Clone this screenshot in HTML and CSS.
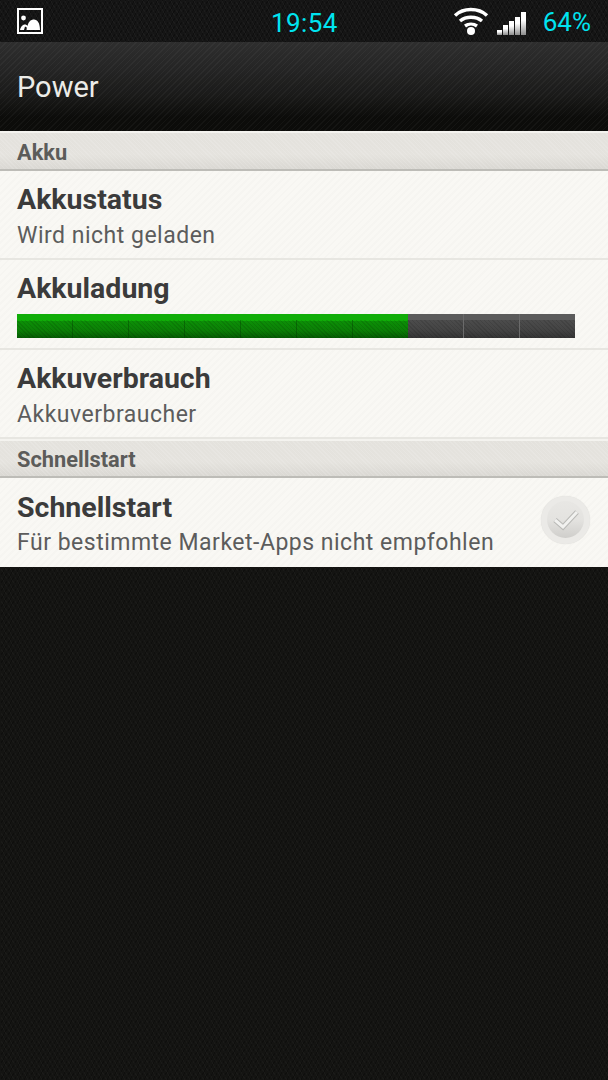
FILE: index.html
```html
<!DOCTYPE html>
<html lang="de">
<head>
    <meta charset="UTF-8">
    <meta name="viewport" content="width=device-width, initial-scale=1.0">
    <title>Power</title>
    <link rel="stylesheet" href="styles.css">
</head>
<body>

    <div class="statusbar">
        <div class="status-left">
            <svg class="picture-icon" width="26" height="26" viewBox="0 0 26 26">
                <rect x="1" y="1" width="24" height="24" fill="none" stroke="#fff" stroke-width="2"/>
                <circle cx="6.5" cy="10" r="2.4" fill="#fff"/>
                <path d="M3 22 C4 18 6 16.500 8 16.500 C9 16.500 10 17 10.500 18 C11.500 13.500 14 11.500 17 11.500 C20.500 11.500 23 15 23 22 Z M7 22 L9.500 22 L9.800 19.500 L8 18.500 Z" fill="#fff" fill-rule="evenodd"/>
            </svg>
        </div>
        <div class="clock">19:54</div>
        <div class="status-right">
            <svg class="wifi-icon" width="36" height="30" viewBox="0 0 36 30">
                <g fill="none" stroke="#fff" stroke-width="3.400">
                    <path d="M2 9.500 C10.500 1.500 25.500 1.500 34 9.500"/>
                    <path d="M7 15 C13 10 23 10 29 15"/>
                    <path d="M12 20 C15.500 17.500 20.500 17.500 24 20"/>
                </g>
                <circle cx="18" cy="25" r="4" fill="#fff"/>
            </svg>
            <div class="signal">
                <span class="signal-bar bar-1"></span>
                <span class="signal-bar bar-2"></span>
                <span class="signal-bar bar-3"></span>
                <span class="signal-bar bar-4"></span>
                <span class="signal-bar bar-5"></span>
            </div>
            <div class="battery-text">64%</div>
        </div>
    </div>

    <div class="actionbar">
        <h1>Power</h1>
    </div>

    <div class="list">
        <div class="section section-first">Akku</div>

        <div class="row">
            <div class="row-title">Akkustatus</div>
            <div class="row-sub">Wird nicht geladen</div>
        </div>

        <div class="row row-level">
            <div class="row-title">Akkuladung</div>
            <div class="level">
                <div class="level-fill"></div>
                <div class="level-rest"></div>
            </div>
        </div>

        <div class="row">
            <div class="row-title">Akkuverbrauch</div>
            <div class="row-sub">Akkuverbraucher</div>
        </div>

        <div class="section">Schnellstart</div>

        <div class="row row-check">
            <div class="row-text">
                <div class="row-title">Schnellstart</div>
                <div class="row-sub">Für bestimmte Market-Apps nicht empfohlen</div>
            </div>
            <div class="check">
                <div class="check-inner">
                    <svg width="30" height="24" viewBox="0 0 30 24">
                        <path d="M4 12 L12 19 L26 4" fill="none" stroke="#b9b9b6" stroke-width="5"/>
                        <path d="M4 12 L12 19 L26 4" fill="none" stroke="#f1f1ef" stroke-width="3"/>
                    </svg>
                </div>
            </div>
        </div>
    </div>

</body>
</html>
```

FILE: styles.css
```css
* {
    box-sizing: border-box;
}

html, body {
    height: 100%;
}

body {
    margin: 0;
    font-family: Roboto, "Liberation Sans", sans-serif;
    background-color: #141412;
    background-image:
        repeating-linear-gradient(60deg, rgba(255,255,255,0.025) 0 1px, transparent 1px 4px),
        repeating-linear-gradient(120deg, rgba(0,0,0,0.25) 0 1px, transparent 1px 4px);
    overflow: hidden;
}

.statusbar {
    height: 42px;
    display: flex;
    align-items: center;
    justify-content: space-between;
    position: relative;
    padding: 0 17px;
    background-color: #151515;
    background-image:
        repeating-linear-gradient(60deg, rgba(255,255,255,0.03) 0 1px, transparent 1px 4px),
        repeating-linear-gradient(120deg, rgba(0,0,0,0.3) 0 1px, transparent 1px 4px);
}

.status-left {
    display: flex;
    margin-top: -1px;
}

.clock {
    position: absolute;
    left: 271px;
    top: 8px;
    font-size: 26px;
    line-height: 30px;
    letter-spacing: 0.4px;
    color: #00e4f0;
}

.status-right {
    display: flex;
    align-items: center;
}

.wifi-icon {
    margin-right: 8px;
}

.signal {
    display: flex;
    align-items: flex-end;
    gap: 1px;
    height: 24px;
    margin-right: 17px;
    margin-top: 4px;
}

.signal-bar {
    width: 5px;
    background: linear-gradient(#fff 35%, #8d8d8d);
}

.bar-1 { height: 5px; }
.bar-2 { height: 10px; }
.bar-3 { height: 14px; }
.bar-4 { height: 18px; }
.bar-5 { height: 23px; }

.battery-text {
    font-size: 26px;
    line-height: 30px;
    color: #00e4f0;
    margin-top: 2px;
}

.actionbar {
    height: 89px;
    display: flex;
    align-items: center;
    padding: 1px 17px 0;
    background-image:
        repeating-linear-gradient(135deg, rgba(255,255,255,0.035) 0 1px, transparent 1px 4px),
        linear-gradient(#2e2e2e 0, #252525 30%, #1a1a19 60%, #0c0c0a 85%, #0c0c0a 100%);
    background-color: #0c0c0a;
}

h1 {
    margin: 0;
    font-size: 29px;
    font-weight: 400;
    color: #ecece8;
}

.list {
    background-color: #f7f6f2;
}

.section {
    height: 39px;
    padding: 5px 17px 0;
    font-size: 21.8px;
    line-height: 27px;
    font-weight: 700;
    color: #5c5c5a;
    border-top: 2px solid #f4f3ef;
    border-bottom: 2px solid #bdbcb7;
    background-image:
        repeating-linear-gradient(45deg, rgba(255,255,255,0.12) 0 1px, transparent 1px 3px),
        linear-gradient(#e4e2dd 0, #e5e3de 60%, #dad8d3 100%);
}

.section-first {
    height: 40px;
    padding-top: 6px;
}

.row {
    height: 89px;
    padding: 11px 17px 0;
    border-bottom: 2px solid #e7e6e1;
    background-color: #f9f8f4;
    background-image: repeating-linear-gradient(135deg, rgba(0,0,0,0.012) 0 2px, transparent 2px 5px);
}

.row-title {
    font-size: 28.5px;
    line-height: 35px;
    font-weight: 700;
    color: #3b3b3b;
}

.row-sub {
    margin-top: 2px;
    font-size: 23px;
    line-height: 33px;
    letter-spacing: 0.5px;
    color: #5c5c5c;
}

.row-level {
    height: 90px;
}

.level {
    display: flex;
    width: 558px;
    height: 24px;
    margin-top: 8px;
}

.level-fill {
    width: 391px;
    background-image:
        repeating-linear-gradient(90deg, transparent 0 55px, rgba(0,50,0,0.35) 55px 56px),
        repeating-linear-gradient(45deg, rgba(0,0,0,0.1) 0 1px, transparent 1px 3px),
        linear-gradient(#0c8f07 0, #0b7f06 55%, #055c03 100%);
    background-size: 100% 18px, 100% 18px, 100% 17px;
    background-position: bottom;
    background-repeat: no-repeat;
    background-color: #10ad08;
}

.level-rest {
    flex: 1;
    background-image:
        repeating-linear-gradient(90deg, transparent 0 55px, #6a6a6a 55px 56px),
        repeating-linear-gradient(45deg, rgba(0,0,0,0.1) 0 1px, transparent 1px 3px),
        linear-gradient(#4c4c4c 0, #444 55%, #343434 100%);
    background-size: 100% 100%, 100% 18px, 100% 18px;
    background-position: bottom;
    background-repeat: no-repeat;
    background-color: #5b5b5b;
}

.row-check {
    display: flex;
    align-items: flex-start;
    justify-content: space-between;
    padding-top: 12px;
    padding-right: 18px;
    border-bottom: none;
}

.row-check .row-sub {
    margin-top: 1px;
}

.check {
    width: 49px;
    height: 48px;
    margin-top: 6px;
    padding: 5px 6px;
    border-radius: 50%;
    background-color: #ebeae7;
    box-shadow: 0 0 1px #d8d7d3;
}

.check-inner {
    width: 37px;
    height: 37px;
    display: flex;
    align-items: center;
    justify-content: center;
    border-radius: 50%;
    background-image: linear-gradient(#e8e7e4 0, #e4e3e0 50%, #cfcecb 100%);
}
```
